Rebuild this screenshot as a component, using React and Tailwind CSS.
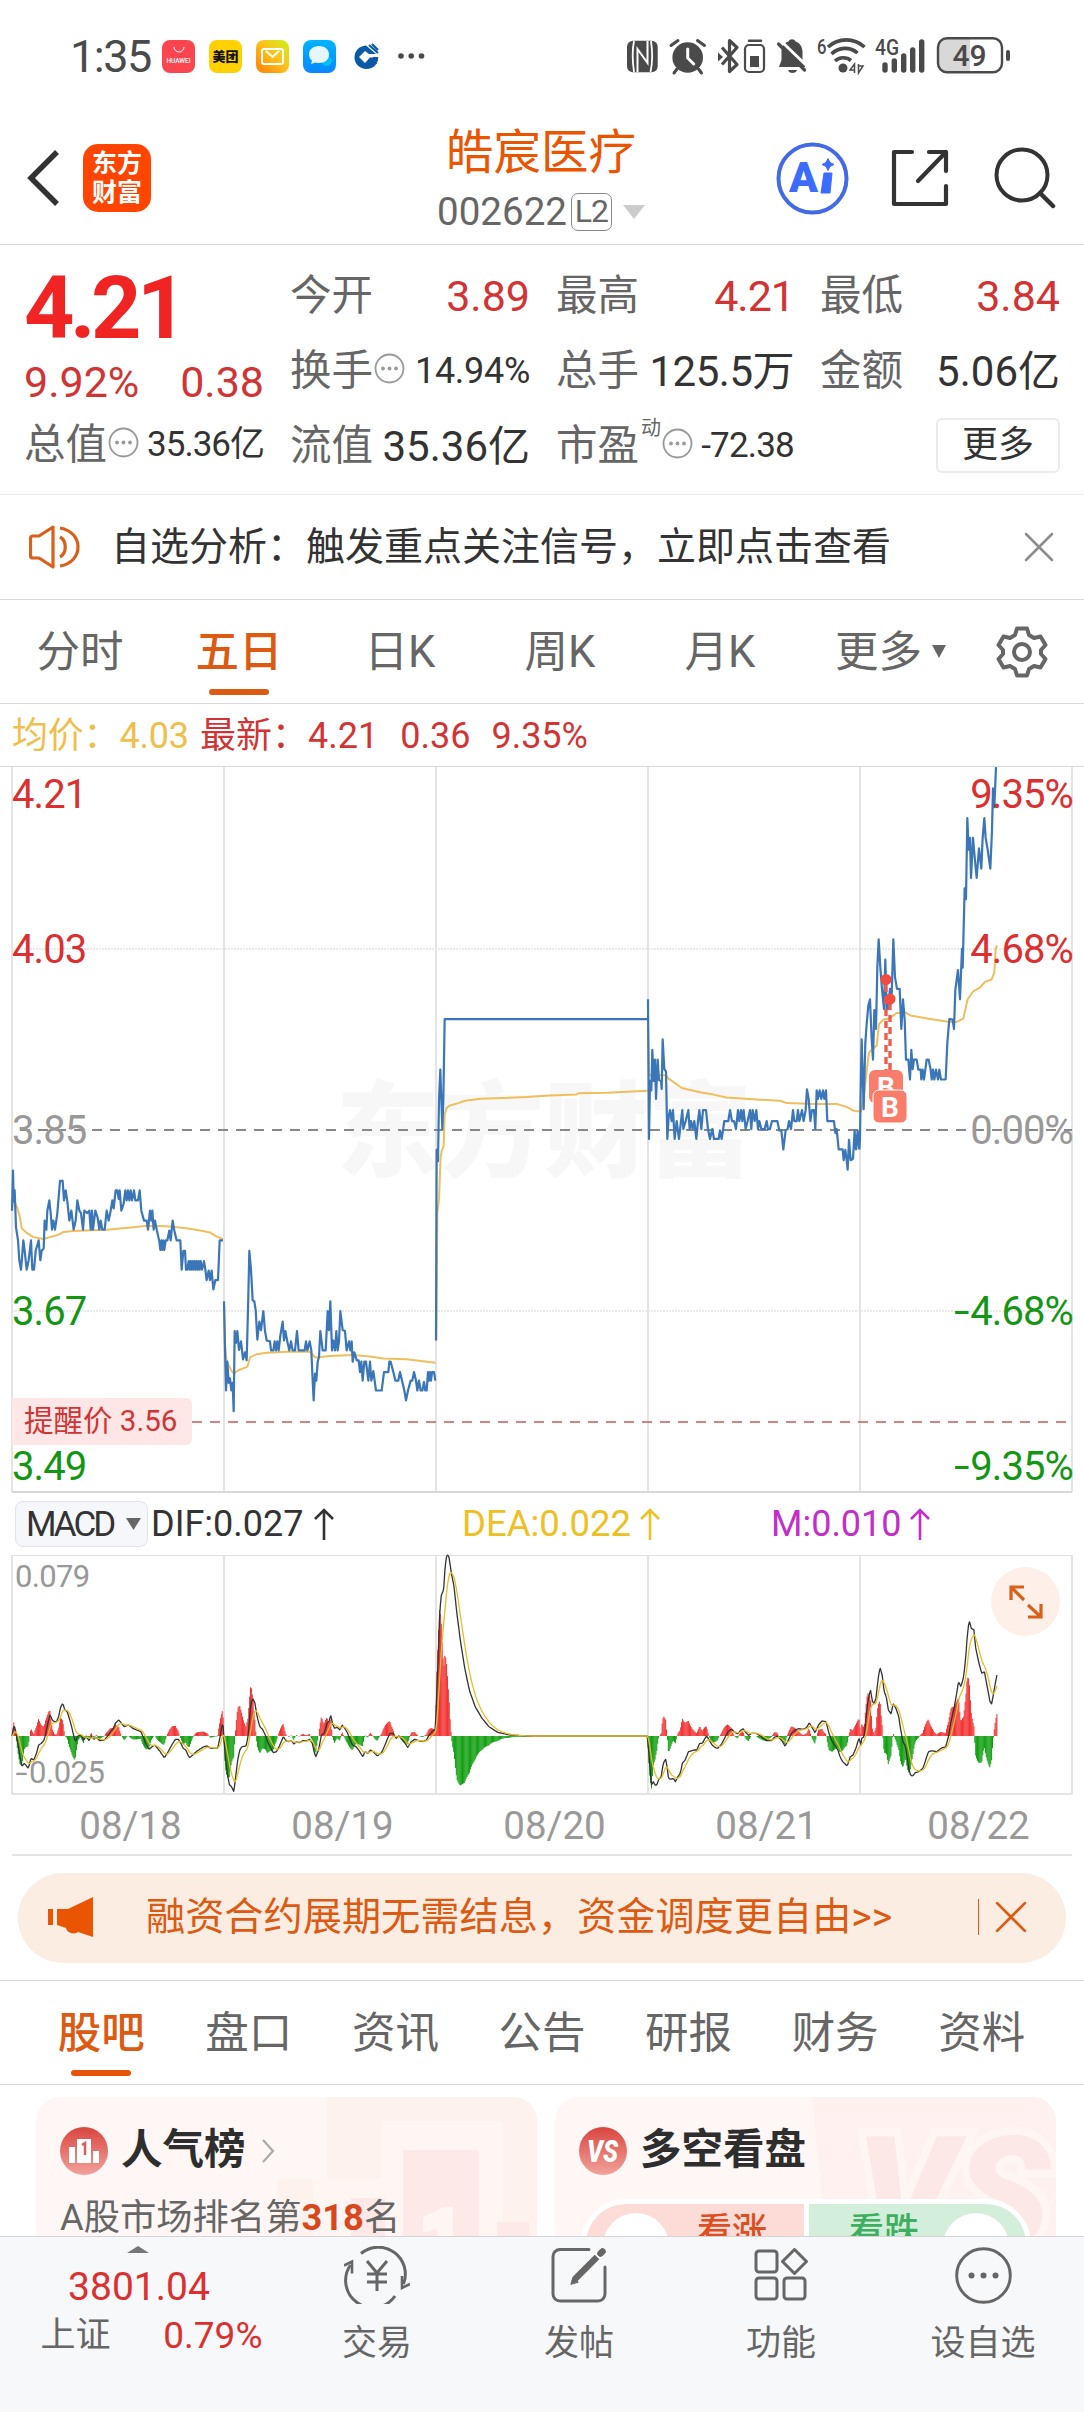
import { ChevronRight } from 'lucide-react'

// ---------- chart data ----------
// each trading day: [x offset of the segment, price points, average points]
const DAYS = [
  [-36,
    '36,955 39,870 41,935 44,912 48,990 54,1018 58,1060 63,1080 66,1055 70,1018 74,1040 80,1080 86,1060 93,1018 97,1080 102,1080 107,1040 116,1018 121,1060 125,1040 131,1035 134,976 139,995 142,955 148,933 152,960 156,995 160,976 165,995 172,960 180,892 188,892 192,933 197,912 202,935 208,976 214,955 221,995 227,976 232,933 238,955 243,960 249,995 253,955 262,960 268,955 272,995 276,955 279,995 286,955 293,970 298,995 302,976 307,995 314,995 320,955 326,976 332,955 337,933 341,950 347,912 352,912 356,930 359,912 364,955 371,940 376,912 380,933 384,912 388,933 392,912 396,933 402,912 406,933 414,933 419,912 424,955 432,976 440,976 444,995 450,955 454,976 457,955 461,995 465,976 470,995 478,1020 481,1038 484,1018 487,1038 490,1018 493,1038 497,1018 502,1018 508,997 512,1018 518,976 523,997 530,1018 541,1018 545,1080 550,1040 555,1040 558,1080 562,1080 566,1062 569,1080 572,1062 575,1080 578,1062 581,1080 584,1062 587,1080 590,1062 593,1080 596,1062 599,1080 602,1062 606,1080 612,1062 616,1080 620,1102 626,1082 630,1102 635,1082 640,1122 646,1102 654,1102 659,1018 669,1018',
    '36,950 40,930 52,950 60,970 65,992 80,1002 100,1011 130,1015 155,1010 175,1006 190,1000 220,998 330,995 400,990 440,987 500,988 560,992 600,997 630,1001 650,1010 669,1015'],
  [-36,
    '672,1147 675,1250 678,1336 682,1275 686,1320 690,1310 694,1336 698,1320 701,1380 704,1210 708,1235 712,1210 717,1250 723,1232 729,1270 735,1255 740,1272 744,1165 748,1040 753,1080 758,1145 763,1147 767,1165 772,1228 778,1190 783,1208 790,1168 795,1210 800,1230 810,1232 813,1251 820,1251 824,1232 828,1251 832,1232 836,1251 841,1220 848,1190 852,1230 856,1210 862,1232 868,1251 873,1232 878,1251 885,1251 891,1210 896,1251 914,1251 918,1232 922,1251 929,1232 934,1251 937,1300 941,1357 945,1300 949,1315 953,1275 957,1265 961,1210 968,1251 977,1251 983,1168 987,1208 991,1147 996,1251 1000,1230 1005,1251 1009,1210 1013,1251 1017,1232 1021,1168 1028,1208 1035,1210 1040,1251 1047,1232 1051,1251 1055,1232 1058,1275 1063,1255 1070,1272 1076,1272 1080,1297 1084,1275 1088,1315 1093,1275 1098,1275 1105,1315 1110,1275 1114,1315 1120,1295 1128,1336 1145,1336 1152,1297 1165,1297 1168,1275 1172,1275 1180,1297 1186,1315 1195,1315 1200,1297 1206,1315 1213,1336 1218,1357 1224,1336 1232,1315 1237,1315 1242,1297 1248,1315 1252,1336 1257,1315 1262,1336 1267,1336 1272,1318 1276,1336 1280,1336 1284,1297 1287,1315 1290,1297 1293,1315 1296,1297 1302,1297 1306,1315',
    '672,1150 675,1240 680,1275 688,1285 694,1294 702,1300 715,1293 742,1286 750,1266 770,1259 800,1256 860,1254 930,1254 946,1266 990,1263 1060,1261 1110,1264 1150,1268 1220,1270 1306,1277'],
  [1224,
    '48,1230 50,826 54,850 57,720 61,656 64,720 67,782 70,720 74,549 684,549',
    '49,1230 52,960 57,930 62,840 66,826 71,818 74,750 80,737 90,732 115,727 135,722 180,718 320,714 390,711 470,709 475,706 560,705 684,701'],
  [1224,
    '684,507 687,803 690,680 694,700 697,614 701,680 705,635 708,718 713,635 717,678 723,680 725,697 728,592 733,655 738,660 742,803 746,755 750,742 755,765 759,742 764,803 770,765 777,803 783,765 787,742 790,782 797,765 805,742 809,782 813,765 818,782 823,765 829,803 834,765 838,742 844,782 849,742 858,742 864,782 870,803 877,782 882,803 896,803 900,785 905,803 913,765 925,765 930,742 936,765 942,765 948,782 954,742 958,765 963,742 967,765 971,742 977,782 983,765 990,742 994,782 998,742 1004,765 1009,742 1014,782 1018,765 1024,782 1034,782 1040,765 1044,782 1050,782 1056,765 1072,765 1078,785 1084,785 1090,825 1097,785 1103,782 1107,765 1113,782 1119,742 1123,765 1130,765 1134,742 1138,765 1146,742 1151,765 1157,742 1161,698 1166,718 1171,765 1176,742 1182,742 1186,782 1190,700 1194,718 1199,700 1204,718 1209,700 1213,718 1218,700 1222,765 1242,765 1246,790 1250,782 1256,825 1268,825 1271,848 1276,826 1280,848 1283,868 1287,805 1292,848 1299,845 1304,785 1308,825 1313,785 1317,825',
    '684,560 687,668 738,668 745,675 760,682 785,695 840,704 880,709 920,715 1000,719 1080,722 1100,727 1180,729 1250,729 1280,735 1300,743 1320,745'],
  [2304,
    '238,825 240,803 242,700 245,592 251,740 256,600 260,560 265,520 270,507 275,590 279,635 283,530 288,570 292,440 296,380 301,440 306,485 312,528 316,423 320,528 324,528 330,485 335,500 340,380 345,460 351,485 359,485 364,570 369,507 374,550 378,635 385,635 390,677 394,614 398,655 402,635 410,635 415,656 422,656 424,677 428,656 432,677 440,635 446,635 452,656 455,677 459,656 463,677 468,656 474,677 478,656 483,677 497,677 502,600 508,549 518,550 522,570 526,487 534,445 540,507 546,400 548,440 554,272 558,295 562,123 566,190 570,165 573,250 579,165 584,205 590,250 597,187 604,230 608,165 613,123 617,165 623,190 631,230 636,150 639,60 643,100 648,15',
    '243,745 250,720 260,660 267,620 290,605 297,560 310,550 330,547 350,536 375,535 395,542 460,550 510,555 530,555 550,548 563,507 580,490 600,482 615,470 635,465 643,450 647,400 651,393'],
]

const DIF_A =
  '35,738 41,705 46,725 52,760 58,800 64,830 70,820 75,825 82,835 90,805 98,810 106,790 112,765 120,760 128,750 136,715 141,690 145,675 152,690 158,695 164,695 170,680 176,650 182,640 188,660 195,665 205,700 212,730 218,755 226,738 234,735 242,750 250,740 258,752 264,738 272,748 280,742 288,752 302,750 312,738 320,725 328,715 334,700 344,690 352,700 360,710 372,705 385,715 395,720 408,725 416,745 424,765 432,778 440,770 448,765 456,775 464,785 470,795 476,803 484,790 492,775 500,760 508,748 516,748 524,760 530,775 538,780 544,795 549,803 558,795 568,785 578,778 590,770 600,768 610,775 620,775 630,775 636,745 645,695 648,745 652,800 658,850 664,885 670,890 677,905 682,860 688,810 694,780 700,770 712,768 718,740 722,690 726,640 732,625 738,640 744,680 752,710 760,718 768,735 774,755 782,770 790,788 800,785 808,770 814,755 820,740 828,752 836,755 844,752 850,762 858,755 866,758 876,752 888,752 896,748 904,760 910,790 914,800 922,780 930,735 938,730 946,700 952,695 957,675 962,700 968,715 976,712 984,720 990,705 998,715 1006,730 1012,745 1020,765 1030,770 1038,780 1044,790 1050,800 1056,785 1064,790 1072,780 1080,785 1092,798 1104,788 1112,770 1120,750 1128,730 1138,730 1146,745 1155,738 1164,750 1172,760 1180,772 1190,755 1200,748 1212,752 1224,755 1234,750 1242,735 1250,725 1260,718 1264,600 1268,500 1272,380 1276,320 1279,310 1284,300 1288,230 1292,200 1296,194 1300,205 1304,235 1308,260 1314,290 1322,370 1332,450 1344,530 1358,600 1375,650 1395,685 1415,710 1440,727 1475,735 1520,738'
const DIF_B =
  '305,738 312,830 317,885 322,875 327,885 332,885 337,870 345,860 349,830 353,815 358,808 362,830 366,865 372,868 380,865 386,875 392,862 400,850 406,820 414,810 424,785 440,780 448,780 456,760 464,760 470,748 476,738 484,750 492,765 500,772 508,775 518,765 528,745 538,725 548,717 556,725 566,732 574,722 582,716 590,728 598,736 606,730 620,730 632,738 640,745 650,752 664,752 672,742 680,738 688,745 696,755 703,768 712,752 722,730 732,720 742,716 756,718 766,712 773,698 780,710 790,728 800,705 810,693 822,695 830,730 840,755 850,770 856,780 862,800 870,815 883,828 892,800 900,795 908,775 917,745 923,765 925,745 932,740 936,700 942,640 950,598 956,635 961,640 966,625 972,570 978,532 984,555 990,605 996,620 1002,660 1010,672 1016,640 1024,655 1032,680 1038,720 1044,755 1052,770 1060,830 1066,855 1072,858 1080,848 1090,845 1102,835 1110,810 1118,785 1128,782 1142,785 1154,775 1168,770 1176,740 1184,690 1192,655 1198,620 1205,575 1212,590 1220,560 1226,500 1230,440 1234,405 1237,395 1242,415 1250,420 1254,470 1262,510 1272,550 1280,545 1288,590 1296,635 1301,642 1308,600 1317,550'

const parse = (str) => str.split(' ').map(p => p.split(',').map(Number))

// DIF key points in pixels, y measured upwards from the zero axis
const difPoints = [
  ...parse(DIF_A).map(([x, y]) => [(x - 35) / 2.893, (738 - y) / 3]),
  ...parse(DIF_B).map(([x, y]) => [x / 2.893 + 530, (738 - y) / 3]),
]

// one sample per minute, 240 minutes a day; DEA is the 9 period EMA of DIF
function buildMacd() {
  const step = 212 / 240
  const end = difPoints[difPoints.length - 1][0]
  const out = []
  let i = 0
  let dea = 0
  for (let x = 0; x <= end; x += step) {
    while (i < difPoints.length - 2 && difPoints[i + 1][0] < x) i++
    const [x0, y0] = difPoints[i]
    const [x1, y1] = difPoints[i + 1]
    const dif = y0 + ((y1 - y0) * (x - x0)) / (x1 - x0)
    dea += (dif - dea) * 0.2
    out.push({ x, dif, dea, bar: 2 * (dif - dea) })
  }
  return out
}

const ZERO = 181
const macd = buildMacd()
const linePath = (key) => macd.map(m => `${m.x.toFixed(1)},${(ZERO - m[key]).toFixed(1)}`).join(' ')
const barPath = (up) => macd
  .filter(m => (up ? m.bar > 0.3 : m.bar < -0.3))
  .map(m => `M${m.x.toFixed(2)} ${ZERO}V${(ZERO - m.bar).toFixed(1)}`)
  .join('')

// ---------- small pieces ----------
function Dots({ className = '' }) {
  return (
    <svg width="31" height="31" viewBox="0 0 31 31" className={`shrink-0 ${className}`}>
      <circle cx="15.5" cy="15.5" r="14" fill="none" stroke="#999" strokeWidth="1.8" />
      <circle cx="9" cy="15.5" r="1.9" fill="#999" />
      <circle cx="15.5" cy="15.5" r="1.9" fill="#999" />
      <circle cx="22" cy="15.5" r="1.9" fill="#999" />
    </svg>
  )
}

function Stat({ label, value, dots, sup, className = 'text-[43px] text-[#333]' }) {
  return (
    <div className="h-[75px] flex items-center whitespace-nowrap">
      <span className="text-[41.5px] text-[#666] mt-[2px]">{label}</span>
      {sup && <span className="text-[20px] text-[#666] self-start leading-none mt-[10px] ml-[2px]">{sup}</span>}
      {dots && <Dots className="ml-[1px] -mt-[4px]" />}
      <span className={`ml-auto mt-[1px] ${className}`}>{value}</span>
    </div>
  )
}

// wide hyphen in front of negative axis values
function Neg({ children }) {
  return (
    <>
      <span className="inline-block scale-x-140 mr-[4px]">-</span>{children}
    </>
  )
}

function Close({ size, color, width }) {
  return (
    <svg width={size} height={size} viewBox="0 0 30 30" fill="none" stroke={color} strokeWidth={width} strokeLinecap="round">
      <path d="M2 2L28 28M28 2L2 28" />
    </svg>
  )
}

function StatusBar() {
  return (
    <div className="h-[112px] flex items-center shrink-0">
      <span className="w-[92px] ml-[70px] text-[45px] text-[#4a4a4a] tracking-[-1.500px] leading-none">1:35</span>
      <div className="flex items-center gap-[14px]">
        <div className="w-[33px] h-[33px] rounded-[8px] bg-[#fb4650] flex flex-col items-center justify-center">
          <svg width="12" height="7" viewBox="0 0 12 7" fill="none" stroke="#fff" strokeWidth="1"><path d="M1 0a5 5 0 0 0 10 0" /></svg>
          <span className="text-[6.5px] leading-none text-white font-medium mt-[4px]">HUAWEI</span>
        </div>
        <div className="w-[33px] h-[33px] rounded-[8px] bg-[#ffd100] flex items-center justify-center text-[13px] leading-none font-black text-[#111]">美团</div>
        <div className="w-[33px] h-[33px] rounded-[8px] bg-linear-to-tr from-[#ff7a00] via-[#ffbe1a] to-[#c6f01c] flex items-center justify-center">
          <svg width="23" height="17" viewBox="0 0 23 17" fill="none" stroke="#fff" strokeWidth="2"><rect x="1" y="1" width="21" height="15" rx="2" /><path d="M5 3l6.500 6L18 3" /></svg>
        </div>
        <div className="w-[33px] h-[33px] rounded-[8px] bg-linear-to-b from-[#00b4ff] to-[#0a86ff] flex items-center justify-center">
          <svg width="24" height="22" viewBox="0 0 24 22"><circle cx="18.500" cy="16" r="5" fill="#00c3f5" /><path d="M11 1c6 0 10 3.500 10 8.500S17 18 11 18c-1.500 0-2.500 0-3.500-.5L3 19l1-3.500C2 14 1 12 1 9.500 1 4.500 5 1 11 1z" fill="#e6f6ff" /></svg>
        </div>
        <svg width="33" height="33" viewBox="0 0 33 33">
          <path d="M16 5.500C9 6 4.500 11 4.500 17.500S10 29 16.500 29c6 0 10.500-3.500 11.500-10l-5-1.500h-3L15 23l-6-6 6-6 4 3h7z" fill="#0a5aa8" />
          <path d="M19 5l9 8M22 4l6 6" stroke="#0a5aa8" strokeWidth="2.200" />
          <path d="M23 17h5.500l-2 7-5-1z" fill="#0a5aa8" />
        </svg>
        <svg width="28" height="6" viewBox="0 0 28 6" fill="#4a4a4a"><circle cx="4" cy="3" r="2.800" /><circle cx="14.200" cy="3" r="2.800" /><circle cx="24.500" cy="3" r="2.800" /></svg>
      </div>
      <svg width="400" height="40" viewBox="0 0 400 40" className="ml-auto mr-[64px]" fill="none" stroke="#4a4a4a" strokeWidth="2.500">
        {/* nfc */}
        <rect x="7" y="4.700" width="30.700" height="31.600" rx="6" fill="#4a4a4a" stroke="none" />
        <path d="M14 5c-2 10-1.500 21 0 31M31 5c1.500 10 1.500 22-.5 31" stroke="#fff" strokeWidth="1.800" />
        <path d="M17.500 36V13l10 14V5" stroke="#fff" strokeWidth="2" />
        {/* alarm */}
        <circle cx="67.700" cy="21.500" r="15.300" fill="#4a4a4a" stroke="none" />
        <path d="M51 9.500l7-5M84.500 9.500l-7-5M57 33l-3 4M78.500 33l3 4" strokeWidth="3" strokeLinecap="round" />
        <path d="M67.700 13v9l6 6" stroke="#fff" strokeWidth="3" strokeLinecap="round" />
        {/* bluetooth */}
        <path d="M102 11.500l15 17-7.500 7V4.500l7.500 7-15 17" strokeWidth="3.200" strokeLinejoin="round" />
        <path d="M98 16.500l5 4.500-5 4.500z" fill="#4a4a4a" stroke="none" />
        <rect x="125" y="9" width="19" height="27" rx="4" strokeWidth="2.200" />
        <path d="M129 4.700h12" strokeLinecap="round" strokeWidth="2.500" />
        <rect x="130" y="20" width="9" height="11" fill="#4a4a4a" stroke="none" />
        {/* muted bell */}
        <path d="M159 31h26v-3l-2.500-4V16c0-6-3.500-9.500-7-10.500-1-3-6-3-7 0-4 1-7 4.500-7 10.500v8z" fill="#4a4a4a" stroke="none" />
        <path d="M168 34h9c-1 4-8 4-9 0z" fill="#4a4a4a" stroke="none" />
        <path d="M160 4l28 27" stroke="#fff" strokeWidth="3" />
        <path d="M158.500 8l26 26" strokeWidth="3.200" strokeLinecap="round" />
        {/* wifi */}
        <text x="197" y="17.500" fontSize="21" fontWeight="500" fill="#4a4a4a" stroke="none" textLength="9.500" lengthAdjust="spacingAndGlyphs">6</text>
        <path d="M208 11a27 27 0 0 1 36.500 0M211.500 18a19 19 0 0 1 26-1M215 25a12 12 0 0 1 16-.5" strokeWidth="3.600" />
        <circle cx="223" cy="32" r="4.500" fill="#4a4a4a" stroke="none" />
        <path d="M234.500 37v-9l-4.500 6h4M238.500 28v9l4.500-7h-4" strokeWidth="1.500" />
        {/* signal */}
        <text x="255" y="18.500" fontSize="22" fontWeight="500" fill="#4a4a4a" stroke="none" textLength="24" lengthAdjust="spacingAndGlyphs">4G</text>
        <path d="M265 29v5M274.300 25v9M283.700 20v14M292.700 14v20M301.700 6v28" strokeWidth="5.400" strokeLinecap="round" />
        {/* battery */}
        <path d="M350 2v35h-23a9 9 0 0 1-9-9V11a9 9 0 0 1 9-9z" fill="#d8d8d8" stroke="none" />
        <rect x="318" y="2.300" width="64" height="34" rx="9" strokeWidth="2.400" />
        <text x="349.500" y="30" fontSize="30" fontWeight="500" textAnchor="middle" fill="#4a4a4a" stroke="none">49</text>
        <rect x="386" y="14" width="4" height="11" rx="2" fill="#4a4a4a" stroke="none" />
      </svg>
    </div>
  )
}

function Header() {
  return (
    <header className="h-[133px] grid grid-cols-[1fr_auto_1fr] items-center border-b border-[#d8d8d8] shrink-0">
      <div className="flex items-center pl-[26px]">
        <svg width="34" height="56" viewBox="0 0 34 56" fill="none" stroke="#333" strokeWidth="5.500" strokeLinejoin="miter"><path d="M31 2L5 28l26 26" /></svg>
        <div className="ml-[23px] w-[68px] h-[68px] rounded-[15px] bg-[#ff4500] text-white text-[25px] leading-[29px] font-bold flex flex-col items-center justify-center">
          <span>东方</span>
          <span>财富</span>
        </div>
      </div>
      <div className="flex flex-col items-center pt-[9px] -ml-[2px]">
        <div className="h-[59px] text-[47.500px] leading-[59px] text-[#ea5504]">皓宸医疗</div>
        <div className="h-[59px] flex items-center text-[#666] text-[38.500px]">
          <span>002622</span>
          <span className="ml-[4px] w-[41px] h-[38px] rounded-[7px] border-[1.500px] border-[#888] text-[32px] leading-[35px] text-center tracking-[-1px]">L2</span>
          <svg width="22" height="14" viewBox="0 0 22 14" className="ml-[11px]" fill="#ccc"><path d="M0 0h22L11 14z" /></svg>
        </div>
      </div>
      <div className="flex items-center justify-end pr-[28px]">
        <svg width="73" height="73" viewBox="0 0 73 73">
          <circle cx="36.500" cy="36.500" r="34" fill="none" stroke="#4169e8" strokeWidth="4" />
          <text x="13" y="50" fontSize="42" fontWeight="900" fill="#3c6bff" textLength="29" lengthAdjust="spacingAndGlyphs">A</text>
          <path d="M48 31h8l-2 20h-9z" fill="#3c6bff" stroke="#3c6bff" strokeLinejoin="round" />
          <path d="M52 16.500l2 4 4 2-4 2-2 4-2-4-4-2 4-2z" fill="#3c6bff" stroke="#3c6bff" />
        </svg>
        <svg width="58" height="58" viewBox="0 0 58 58" className="ml-[42px]" fill="none" stroke="#333" strokeWidth="4.200" strokeLinecap="round" strokeLinejoin="round">
          <path d="M21 3H3v52h52V37M38 3h17v19M55 3L27 32" />
        </svg>
        <svg width="62" height="62" viewBox="0 0 62 62" className="ml-[45px]" fill="none" stroke="#333" strokeWidth="4">
          <circle cx="28" cy="28" r="25.500" />
          <path d="M46 46l13 13" strokeLinecap="round" strokeWidth="4.500" />
        </svg>
      </div>
    </header>
  )
}

function Quote() {
  return (
    <section className="h-[250px] pt-[13px] grid grid-cols-[240px_240px_238px_240px] gap-x-[26px] pl-[24px] border-b border-[#ececec] shrink-0">
      <div>
        <div className="h-[99px] flex items-center text-[88px] font-bold text-[#f12424] tracking-[-4.500px]">4.21</div>
        <div className="h-[50px] flex items-center justify-between text-[43px] text-[#d13434]"><span>9.92%</span><span>0.38</span></div>
        <Stat label="总值" value="35.36亿" dots className="text-[35px] text-[#333] tracking-[-1px]" />
      </div>
      <div>
        <Stat label="今开" value="3.89" className="text-[43px] text-[#d13434]" />
        <Stat label="换手" value="14.94%" dots className="text-[36px] text-[#333] tracking-[-0.300px]" />
        <Stat label="流值" value="35.36亿" className="text-[42px] text-[#333]" />
      </div>
      <div>
        <Stat label="最高" value="4.21" className="text-[43px] text-[#d13434] tracking-[-1px]" />
        <Stat label="总手" value="125.5万" className="text-[42px] text-[#333] tracking-[-0.500px]" />
        <Stat label="市盈" sup="动" value="-72.38" dots className="text-[35px] text-[#333] tracking-[-0.800px]" />
      </div>
      <div>
        <Stat label="最低" value="3.84" className="text-[43px] text-[#d13434]" />
        <Stat label="金额" value="5.06亿" className="text-[42px] text-[#333]" />
        <div className="h-[75px] flex items-center justify-end">
          <div className="w-[124px] h-[55px] rounded-[6px] border-2 border-[#ebebeb] flex items-center justify-center text-[36px] text-[#333] pb-[2px]">更多</div>
        </div>
      </div>
    </section>
  )
}

function Notice() {
  return (
    <div className="h-[105px] flex items-center pl-[29px] pr-[30px] border-b border-[#d8d8d8] shrink-0">
      <svg width="52" height="44" viewBox="0 0 52 44" fill="none" stroke="#d9601a" strokeWidth="3.200" strokeLinejoin="round">
        <path d="M24 2L10 11H4c-1.500 0-2.500 1-2.500 2.500v17C1.500 32 2.500 33 4 33h6l14 9z" />
        <path d="M31 12c7 4 7 16 0 20M31 3c24 4 24 34 0 38" />
      </svg>
      <span className="ml-[30px] text-[39px] text-[#333] whitespace-nowrap">自选分析：触发重点关注信号，立即点击查看</span>
      <span className="ml-auto"><Close size={30} color="#8c8c8c" width={2.5} /></span>
    </div>
  )
}

function PeriodTabs() {
  const tabs = ['分时', '五日', '日K', '周K', '月K']
  return (
    <nav className="h-[104px] flex items-center border-b border-[#d8d8d8] text-[43.500px] text-[#666] shrink-0">
      {tabs.map(t => t === '五日' ? (
        <div key={t} className="relative w-[160px] h-full flex items-center justify-center text-[#dd5a12] font-medium pt-[2px] pr-[2px]">
          {t}
          <span className="absolute bottom-[8px] w-[60px] h-[6px] rounded-full bg-[#dd5a12]" />
        </div>
      ) : (
        <div key={t} className="w-[160px] text-center pt-[2px]">{t}</div>
      ))}
      <span className="ml-[35px] pt-[2px]">更多</span>
      <svg width="14" height="13" viewBox="0 0 14 13" className="ml-[10px]" fill="#666"><path d="M0 0h14L7 13z" /></svg>
      <svg width="52" height="52" viewBox="0 0 52 52" className="ml-[50px]" fill="none" stroke="#666" strokeWidth="4" strokeLinejoin="round">
        <path d="M21 2.500h10l2 6.500 5 3 6.500-1.500 5 8.500-4.500 5v4l4.500 5-5 8.500-6.500-1.500-5 3-2 6.500H21l-2-6.500-5-3-6.500 1.500-5-8.500L7 28v-4l-4.500-5 5-8.500L14 12l5-3z" />
        <circle cx="26" cy="26" r="8" />
      </svg>
    </nav>
  )
}

function PriceChart() {
  return (
    <div className="relative mx-[12px] h-[726px] shrink-0">
      <div className="absolute left-[324px] top-[315px] text-[104px] leading-none font-black text-[#f7f7f7] whitespace-nowrap">东方财富</div>
      <svg width="1060" height="726" viewBox="0 0 1060 726" className="absolute inset-0 overflow-visible" fill="none">
        <path d="M0 0V725M212 0V725M424 0V725M636 0V725M848 0V725M1060 0V725" stroke="#e4e4e4" strokeWidth="2" />
        <path d="M0 725H1060" stroke="#d8d8d8" strokeWidth="2" />
        <path d="M0 182H1060M0 544H1060" stroke="#e4e4e4" strokeWidth="1.500" strokeDasharray="2 1" />
        <path d="M8 363H1060" stroke="#888" strokeWidth="1.800" strokeDasharray="10 8" />
        <path d="M180 655H1060" stroke="#c9585c" strokeWidth="1.500" strokeDasharray="10 8" />
        {DAYS.map(([shift, price, avg], i) => (
          <g key={i} transform={`scale(0.33333 0.47192) translate(${shift} -14.800)`} strokeLinejoin="round">
            <polyline points={avg} stroke="#f0be5c" strokeWidth="2" vectorEffect="non-scaling-stroke" />
            <polyline points={price} stroke="#3a76b8" strokeWidth="2.200" vectorEffect="non-scaling-stroke" />
          </g>
        ))}
        {/* buy marks */}
        <g stroke="#f35b4c" strokeWidth="3.400" strokeDasharray="7 5">
          <path d="M874 218V303" />
          <path d="M878 236V325" />
        </g>
        <circle cx="874" cy="212.500" r="5.500" fill="#f24b40" />
        <circle cx="878" cy="232" r="5.500" fill="#f24b40" />
        <g fontSize="28" fontWeight="700" textAnchor="middle">
          <rect x="857" y="303" width="34" height="33" rx="6" fill="#fa7d6c" />
          <text x="874" y="330" fill="#fff">B</text>
          <rect x="861" y="323" width="34" height="33" rx="6" fill="#fa7d6c" stroke="#fff" />
          <text x="878" y="350" fill="#fff">B</text>
        </g>
      </svg>
      <div className="absolute inset-0 text-[40px] leading-[40px] tracking-[-0.900px]">
        <span className="absolute left-0 top-[8px] text-[#dc2f2f]">4.21</span>
        <span className="absolute left-0 top-[163px] text-[#dc2f2f]">4.03</span>
        <span className="absolute left-0 top-[344px] text-[#999]">3.85</span>
        <span className="absolute left-0 top-[525px] text-[#149614]">3.67</span>
        <span className="absolute left-0 top-[680px] text-[#149614]">3.49</span>
        <span className="absolute right-[-1px] top-[8px] text-[#dc2f2f]">9.35%</span>
        <span className="absolute right-[-1px] top-[163px] text-[#dc2f2f]">4.68%</span>
        <span className="absolute right-[-1px] top-[344px] text-[#999]">0.00%</span>
        <span className="absolute right-[-1px] top-[525px] text-[#149614]"><Neg>4.68%</Neg></span>
        <span className="absolute right-[-1px] top-[680px] text-[#149614]"><Neg>9.35%</Neg></span>
      </div>
      <div className="absolute left-0 top-[631px] w-[180px] h-[47px] rounded-r-[6px] bg-[#ffe7e7] text-[29.500px] leading-[47px] text-[#d13434] pl-[12px] whitespace-nowrap">提醒价 3.56</div>
    </div>
  )
}

function Arrow({ className = '' }) {
  return (
    <svg width="20" height="32" viewBox="0 0 20 32" className={className} fill="none" stroke="currentColor" strokeWidth="2.600"><path d="M10 32V2M1 11l9-9 9 9" /></svg>
  )
}

function MacdHeader() {
  return (
    <div className="h-[62px] px-[15px] grid grid-cols-[447px_309px_1fr] items-center text-[36px] leading-none shrink-0">
      <div className="flex items-center text-[#333]">
        <div className="w-[133px] h-[46px] rounded-[8px] border border-[#e4e4e8] bg-[#f6f7fa] flex items-center pl-[10px]">
          <span className="text-[35px] tracking-[-3px]">MACD</span>
          <svg width="15" height="12" viewBox="0 0 15 12" className="ml-[13px]" fill="#666"><path d="M0 0h15L7.500 12z" /></svg>
        </div>
        <span className="ml-[3px]">DIF:0.027</span>
        <Arrow className="ml-[11px]" />
      </div>
      <div className="flex items-center text-[#edc023] text-[36.500px]">DEA:0.022<Arrow className="ml-[9px]" /></div>
      <div className="flex items-center text-[#c32dc9]">M:0.010<Arrow className="ml-[8px]" /></div>
    </div>
  )
}

function MacdChart() {
  return (
    <div className="relative mx-[12px] h-[240px] shrink-0">
      <div className="absolute left-[3px] top-[4px] text-[31px] leading-[36px] text-[#999] tracking-[-0.700px]">0.079</div>
      <div className="absolute left-[5px] top-[200px] text-[31px] leading-[36px] text-[#999] tracking-[-0.500px]"><Neg>0.025</Neg></div>
      <svg width="1060" height="240" viewBox="0 0 1060 240" className="absolute inset-0 overflow-visible" fill="none">
        <path d="M0 .5H1060" stroke="#e0e0e0" />
        <path d="M0 0V239M212 0V239M424 0V239M636 0V239M848 0V239M1060 0V239M0 239H1060" stroke="#e4e4e4" strokeWidth="2" />
        <path d={barPath(true)} stroke="#f22e2e" strokeWidth="1" />
        <path d={barPath(false)} stroke="#0d9d0d" strokeWidth="1" />
        <polyline points={linePath('dif')} stroke="#333" strokeWidth="1.300" strokeLinejoin="round" />
        <polyline points={linePath('dea')} stroke="#e6bd2a" strokeWidth="1.300" strokeLinejoin="round" />
      </svg>
      <div className="absolute right-[12px] top-[12px] w-[69px] h-[69px] rounded-full bg-[#fef0e9] flex items-center justify-center">
        <svg width="34" height="34" viewBox="0 0 34 34" fill="none" stroke="#d9601a" strokeWidth="3.200">
          <path d="M15 2H2v13M2 2l13 13M19 32h13V19M32 32L19 20" />
        </svg>
      </div>
    </div>
  )
}

function Promo() {
  return (
    <div className="h-[125px] border-b border-[#d8d8d8] pt-[17px] px-[18px] shrink-0">
      <div className="h-[90px] rounded-full bg-[#fcede3] flex items-center pl-[30px] pr-[39px] pb-[2px]">
        <svg width="46" height="40" viewBox="0 0 46 40" fill="#ea5504">
          <path d="M0 12h5v16H0zM9 12h11L45 0v40l-15-5c-4 3-11 1-12-4l-9-3z" />
        </svg>
        <span className="ml-[52px] text-[39.200px] text-[#dd5a12] whitespace-nowrap">融资合约展期无需结息，资金调度更自由&gt;&gt;</span>
        <span className="ml-auto mr-[16px] w-px h-[36px] bg-[#dd5a12]" />
        <Close size={32} color="#dd5a12" width={2.6} />
      </div>
    </div>
  )
}

function SectionTabs() {
  return (
    <nav className="h-[104px] grid grid-cols-7 items-center px-[29px] border-b border-[#d8d8d8] text-[43.500px] text-[#666] text-center shrink-0">
      <div className="relative h-full flex items-center justify-center text-[#dd5a12] font-medium pt-[3px] pr-[2px]">
        股吧
        <span className="absolute bottom-[8px] w-[60px] h-[6px] rounded-full bg-[#e6540a]" />
      </div>
      {['盘口', '资讯', '公告', '研报', '财务', '资料'].map(t => <div key={t} className="pt-[3px]">{t}</div>)}
    </nav>
  )
}

function Cards() {
  return (
    <div className="h-[151px] overflow-hidden flex gap-[18px] pl-[36px] pr-[28px] pt-[12px] shrink-0">
      <div className="relative w-[501px] h-[220px] rounded-[24px] bg-[#fff7f5] overflow-hidden shrink-0">
        <svg width="260" height="220" viewBox="0 0 260 220" className="absolute right-0 top-0">
          <path d="M50 0h210v220H0V82h50z" fill="#fef2ef" />
          <path d="M104 24h122v200H104zM36 82h68v140H36z" fill="#fff6f4" />
          <path d="M126 53h76v170h-76zM74 101h34v120H74zM220 125h32v100h-32z" fill="#fdeae8" />
          <path d="M146 120l20-10h10v100h-16v-78l-14 4z" fill="#fff5f3" />
        </svg>
        <div className="relative flex items-center mt-[30px] ml-[24px] h-[48px]">
          <svg width="48" height="48" viewBox="0 0 48 48">
            <defs><linearGradient id="badge" x1="0" y1="0" x2="0" y2="1"><stop stopColor="#d9453f" /><stop offset="1" stopColor="#f3a29c" /></linearGradient></defs>
            <circle cx="24" cy="24" r="24" fill="url(#badge)" />
            <path d="M17 12h14v24H17zM9 20h6v16H9zM33 24h6v12h-6z" fill="#fff" />
            <path d="M22 18l3-2v12" fill="none" stroke="#df5b55" strokeWidth="2.500" />
          </svg>
          <span className="ml-[13px] text-[41.500px] leading-none font-bold text-[#2e2e2e] -mt-[2px]">人气榜</span>
          <svg width="14" height="24" viewBox="0 0 14 24" className="ml-[15px]" fill="none" stroke="#aaa" strokeWidth="2.200"><path d="M2 1l10 11L2 23" /></svg>
        </div>
        <div className="relative ml-[24px] mt-[21px] text-[36.300px] leading-[44px] text-[#666] whitespace-nowrap">A股市场排名第<b className="text-[#d9481c]">318</b>名</div>
      </div>
      <div className="relative w-[501px] h-[220px] rounded-[24px] bg-[#fff7f5] overflow-hidden shrink-0">
        <svg width="244" height="220" viewBox="0 0 244 220" className="absolute right-0 top-0">
          <path d="M0 0h244v220H22z" fill="#fef1ef" />
          <text x="44" y="150" fontSize="156" fontWeight="900" fontStyle="italic" fill="#fce8e6" stroke="#fff5f3" strokeWidth="16" paintOrder="stroke" textLength="194" lengthAdjust="spacingAndGlyphs">VS</text>
        </svg>
        <div className="relative flex items-center mt-[30px] ml-[24px] h-[48px]">
          <svg width="48" height="48" viewBox="0 0 48 48">
            <circle cx="24" cy="24" r="24" fill="url(#badge)" />
            <text x="8" y="35" fontSize="31" fontWeight="900" fontStyle="italic" fill="#fff" textLength="31" lengthAdjust="spacingAndGlyphs">VS</text>
          </svg>
          <span className="ml-[13px] text-[41.500px] leading-none font-bold text-[#2e2e2e] -mt-[2px]">多空看盘</span>
        </div>
        <div className="relative mt-[24px] ml-[26px] w-[450px] h-[90px] rounded-full border-[5px] border-white flex text-[35px] font-medium overflow-hidden bg-white">
          <div className="flex-1 bg-[#fddcd8] text-[#dd4f22] flex items-start pl-[17px] pt-[9px]">
            <span className="w-[66px] h-[66px] rounded-full bg-white" />
            <span className="ml-[28px] leading-[37px]">看涨</span>
          </div>
          <div className="w-[5px]" />
          <div className="flex-1 bg-[#d3eeda] text-[#3fae5f] flex items-start justify-end pr-[17px] pt-[9px]">
            <span className="mr-[24px] leading-[37px]">看跌</span>
            <span className="w-[66px] h-[66px] rounded-full bg-white" />
          </div>
        </div>
      </div>
    </div>
  )
}

const NAV = [
  {
    label: '交易',
    icon: (
      <svg width="66" height="58" viewBox="0 0 66 58" fill="none" stroke="#666" strokeWidth="3">
        <path d="M17 7.500A27 27 0 0 1 59.500 38M51 50A27 27 0 0 1 6.500 19" />
        <path d="M0 19.500l8-4v12M66 38l-8 4V30" strokeWidth="2.600" />
        <path d="M23 15l10 12 10-12M33 27v18M23 28h20M23 36h20" />
      </svg>
    ),
  },
  {
    label: '发帖',
    icon: (
      <svg width="56" height="56" viewBox="0 0 56 56" fill="none" stroke="#666" strokeWidth="3" strokeLinecap="round">
        <path d="M38 2.500H9a7 7 0 0 0-7 7V47a7 7 0 0 0 7 7h38a7 7 0 0 0 7-7V20" />
        <path d="M46 10L24 32" strokeWidth="6.500" strokeLinecap="butt" />
        <path d="M20 37l2-7 5 5z" fill="#666" strokeWidth="1" />
        <path d="M49.500 6.500l2-2" strokeWidth="6.500" />
      </svg>
    ),
  },
  {
    label: '功能',
    icon: (
      <svg width="54" height="54" viewBox="0 0 54 54" fill="none" stroke="#666" strokeWidth="3" strokeLinejoin="round">
        <rect x="2" y="3" width="21" height="21" rx="3" />
        <rect x="2" y="30" width="21" height="21" rx="3" />
        <rect x="30" y="30" width="21" height="21" rx="3" />
        <path d="M40.500 1.500L52.500 13.500 40.500 25.500 28.500 13.500z" />
      </svg>
    ),
  },
  {
    label: '设自选',
    icon: (
      <svg width="57" height="57" viewBox="0 0 57 57" fill="#666">
        <circle cx="28.500" cy="28.500" r="26.800" fill="none" stroke="#666" strokeWidth="3" />
        <circle cx="16.500" cy="28.500" r="3" /><circle cx="28.500" cy="28.500" r="3" /><circle cx="40.500" cy="28.500" r="3" />
      </svg>
    ),
  },
]

function BottomBar() {
  return (
    <footer className="h-[176px] border-t border-[#d4d4d8] bg-[#f7f8fa] grid grid-cols-[276px_202px_202px_202px_202px] shrink-0">
      <div className="flex flex-col items-center pt-[9px] text-[#dc3030]">
        <svg width="22" height="7" viewBox="0 0 22 7" fill="#777"><path d="M11 0l11 7H0z" /></svg>
        <span className="mt-[10px] ml-[2px] text-[39px] leading-[48px]">3801.04</span>
        <div className="flex items-center justify-between w-[222px] ml-[27px] text-[37px] leading-[50px]">
          <span className="text-[35px] text-[#666]">上证</span><span>0.79%</span>
        </div>
      </div>
      {NAV.map(n => (
        <div key={n.label} className="flex flex-col items-center pt-[9px]">
          <div className="h-[58px] flex items-center">{n.icon}</div>
          <span className="mt-[16px] text-[35px] leading-[48px] text-[#666]">{n.label}</span>
        </div>
      ))}
    </footer>
  )
}

export default function App() {
  return (
    <div className="w-[1084px] h-[2412px] bg-white overflow-hidden flex flex-col font-['Roboto','Noto_Sans_CJK_SC',sans-serif]">
      <StatusBar />
      <Header />
      <Quote />
      <Notice />
      <PeriodTabs />
      <div className="h-[63px] flex items-center border-b border-[#d8d8d8] pl-[12px] pt-[2px] text-[36px] whitespace-nowrap shrink-0">
        <span className="text-[#f0be4c] w-[188px] tracking-[-0.200px]">均价：4.03</span>
        <span className="text-[#d13434]">最新：4.21</span>
        <span className="text-[#d13434] ml-[22px]">0.36</span>
        <span className="text-[#d13434] ml-[21px]">9.35%</span>
      </div>
      <PriceChart />
      <MacdHeader />
      <MacdChart />
      <div className="mx-[12px] h-[61px] border-b-2 border-[#e4e4e4] grid grid-cols-5 items-center text-center text-[38.500px] text-[#999] shrink-0">
        {['08/18', '08/19', '08/20', '08/21', '08/22'].map(d => <span key={d} className="pl-[25px] pt-[2px]">{d}</span>)}
      </div>
      <Promo />
      <SectionTabs />
      <Cards />
      <BottomBar />
    </div>
  )
}
